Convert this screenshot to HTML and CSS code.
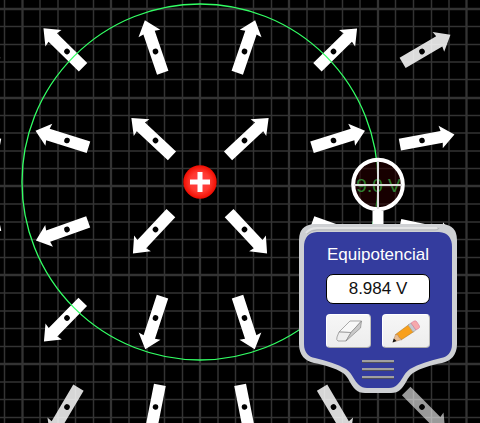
FILE: index.html
```html
<!DOCTYPE html>
<html lang="es">
<head>
<meta charset="utf-8">
<title>Equipotencial</title>
<link rel="stylesheet" href="styles.css">
</head>
<body>
<main class="stage">
  <svg class="field" aria-hidden="true">
    <defs>
      <path id="arrow" d="M33 0L19 11.500L20 6H-22.500V-6H20L19 -11.500ZM2.8 0A2.8 2.8 0 1 0 -2.8 0A2.8 2.8 0 1 0 2.8 0Z" fill-rule="evenodd"/>
      <radialGradient id="charge"><stop offset="0" stop-color="#ff4050"/><stop offset=".6" stop-color="#ff3a30"/><stop offset="1" stop-color="#f00c00"/></radialGradient>
    </defs>
    <path class="minor" d="M4.5 0V423M40 0V423M58 0V423M75.5 0V423M93.5 0V423M129 0V423M147 0V423M164.5 0V423M182.5 0V423M218 0V423M235.5 0V423M253.5 0V423M271.5 0V423M307 0V423M324.5 0V423M342.5 0V423M360 0V423M395.5 0V423M413.5 0V423M431.5 0V423M449 0V423M0 26.5H480M0 44.5H480M0 62H480M0 79.5H480M0 115.5H480M0 133H480M0 151H480M0 168.5H480M0 204H480M0 222H480M0 239.5H480M0 257.5H480M0 293H480M0 311H480M0 328.5H480M0 346.5H480M0 382H480M0 399.5H480M0 417.5H480"/>
    <path class="major" d="M22.5 0V423M111 0V423M200 0V423M289 0V423M378 0V423M466.5 0V423M0 9H480M0 98H480M0 186H480M0 275H480M0 364H480"/>
    <g class="arrows">
      <use href="#arrow" transform="translate(-22 51.5) rotate(210.4)" opacity=".85"/>
      <use href="#arrow" transform="translate(-22 140.5) rotate(190.6)"/>
      <use href="#arrow" transform="translate(-22 229.5) rotate(167.9)"/>
      <use href="#arrow" transform="translate(67 51.5) rotate(224.5)"/>
      <use href="#arrow" transform="translate(155.5 51.5) rotate(251.2)"/>
      <use href="#arrow" transform="translate(244.5 51.5) rotate(288.8)"/>
      <use href="#arrow" transform="translate(333.5 51.5) rotate(315.6)"/>
      <use href="#arrow" transform="translate(422 51.5) rotate(329.6)" opacity=".86"/>
      <use href="#arrow" transform="translate(67 140.5) rotate(197.3)"/>
      <use href="#arrow" transform="translate(155.5 140.5) rotate(223)"/>
      <use href="#arrow" transform="translate(244.5 140.5) rotate(317)"/>
      <use href="#arrow" transform="translate(333.5 140.5) rotate(342.7)"/>
      <use href="#arrow" transform="translate(422 140.5) rotate(349.4)"/>
      <use href="#arrow" transform="translate(67 229.5) rotate(160.4)"/>
      <use href="#arrow" transform="translate(155.5 229.5) rotate(133.2)"/>
      <use href="#arrow" transform="translate(244.5 229.5) rotate(46.8)"/>
      <use href="#arrow" transform="translate(333.5 229.5) rotate(19.6)"/>
      <use href="#arrow" transform="translate(422 229.5) rotate(12.1)"/>
      <use href="#arrow" transform="translate(67 318) rotate(134.4)"/>
      <use href="#arrow" transform="translate(155.5 318) rotate(108.1)"/>
      <use href="#arrow" transform="translate(244.5 318) rotate(71.9)"/>
      <use href="#arrow" transform="translate(67 407) rotate(120.6)" opacity=".84"/>
      <use href="#arrow" transform="translate(155.5 407) rotate(101.2)"/>
      <use href="#arrow" transform="translate(244.5 407) rotate(78.8)"/>
      <use href="#arrow" transform="translate(333.5 407) rotate(59.4)" opacity=".84"/>
      <use href="#arrow" transform="translate(422 407) rotate(45.4)" opacity=".6"/>
    </g>
    <circle class="equipotential" cx="200" cy="182" r="178"/>
    <circle cx="200" cy="182" r="16.7" fill="url(#charge)"/>
    <path class="plus" d="M190 182H210M200 172V192"/>
    <text class="line-label" x="378.5" y="192">9.0 V</text>
    <circle class="lens" cx="378" cy="184.5" r="24.8"/>
    <path class="crosshair" d="M354 185H402M378 161V209"/>
    <path class="stem" d="M378 211V225"/>
  </svg>

  <section class="meter" aria-labelledby="meter-title">
    <svg class="shell" viewBox="0 0 158 170" aria-hidden="true">
      <path fill="#ced0d3" d="M15 0H143Q158 1 158 16V120C158 131 152 137 143 139C132 141 122 144 114 149C108 153 107 161 101 166Q98 169 92 169H66Q60 169 57 166C51 161 50 153 44 149C36 144 26 141 15 139C6 137 0 131 0 120V16Q0 1 15 0Z"/>
      <path fill="#343c9e" d="M18 8H140Q153 9 153 23V120C153 129 148 133 142 134C130 137 120 140 111 145C104 150 103 157 98 161Q95 164 90 164H68Q63 164 60 161C55 157 54 150 47 145C38 140 28 137 16 134C10 133 5 129 5 120V23Q5 9 18 8Z"/>
      <path fill="none" stroke="#e3e4e5" stroke-width="2" d="M7 9Q11 4 18 4H138"/>
      <path fill="none" stroke="#b5b7b9" d="M8 10Q12 6 18 6H136Q140 6 140 4"/>
    </svg>
    <h1 class="title" id="meter-title">Equipotencial</h1>
    <output class="reading">8.984 V</output>
    <div class="tools">
      <button class="tool" type="button" aria-label="Borrar">
        <svg width="26" height="22" viewBox="0 0 26 22" aria-hidden="true">
          <g stroke="#888" stroke-width=".7" stroke-linejoin="round">
            <path fill="#f8f8f8" d="M3 12L14 1H25.500L15 12.500Z"/>
            <path fill="#eee" d="M3 12L15 12.500L10 21H2Q0 20 1 17Z"/>
            <path fill="#c9c9c9" d="M15 12.500L25.500 1L24.500 8L10 21Z"/>
          </g>
        </svg>
      </button>
      <button class="tool tool-draw" type="button" aria-label="Dibujar">
        <svg width="28" height="23" viewBox="0 0 28 23" aria-hidden="true">
          <path fill="#f8a01c" stroke="#a87018" stroke-width=".5" d="M3.500 14.500L17 4.500L22 11.500L9 20Z"/>
          <path fill="#e8bd92" stroke="#a88060" stroke-width=".5" d="M3.500 14.500L6 15L7 17.500L10 19.500L1 22Z"/>
          <path fill="#111" d="M1.800 18.500L4.500 21L.5 22.500Z"/>
          <path fill="#c4c8ce" stroke="#999" stroke-width=".5" d="M16 5L19 3L24 10L21 12Z"/>
          <path fill="#f6a9ac" stroke="#c58" stroke-width=".4" d="M19 3L22 1Q24 .3 25 2L27.500 6Q28 7.500 26.500 8.500L24 10Z"/>
        </svg>
      </button>
    </div>
    <div class="grip" aria-hidden="true"><i></i><i></i><i></i></div>
  </section>
</main>
</body>
</html>
```
FILE: styles.css
```css
* {
  box-sizing: border-box;
}

body {
  margin: 0;
  background: #000;
  font-family: "Liberation Sans", Arial, sans-serif;
}

.stage {
  position: relative;
  min-height: 100vh;
  overflow: hidden;
}

.field {
  position: absolute;
  inset: 0;
  width: 100%;
  height: 100%;
}

.minor,
.major {
  stroke: #333;
  stroke-width: 1.5;
}

.major {
  stroke-width: 2.3;
}

.arrows {
  fill: #fff;
}

.equipotential {
  fill: none;
  stroke: #32ff64;
  stroke-width: 1.3;
}

.plus {
  stroke: #fff;
  stroke-width: 5;
}

.line-label {
  fill: #32ff64;
  font-size: 19px;
  text-anchor: middle;
}

.lens {
  fill: rgb(45 0 0 / 50%);
  stroke: #fff;
  stroke-width: 4;
}

.crosshair {
  stroke: #ddd;
  stroke-width: 2;
}

.stem {
  stroke: #fff;
  stroke-width: 11;
}

.meter {
  position: absolute;
  left: 299px;
  top: 224px;
  width: 158px;
  padding: 20px 27px 12px;
  display: flex;
  flex-direction: column;
  align-items: center;
}

.shell {
  position: absolute;
  inset: 0;
  width: 100%;
}

.title,
.reading,
.tools,
.grip {
  position: relative;
}

.title {
  margin: 0 0 8px;
  color: #fff;
  font-size: 17px;
  font-weight: 400;
  line-height: 22px;
  white-space: nowrap;
}

.reading {
  align-self: stretch;
  height: 30px;
  border: 1px solid #000;
  border-radius: 7px;
  background: #fff;
  color: #111;
  font-size: 17px;
  line-height: 28px;
  text-align: center;
}

.tools {
  align-self: stretch;
  display: flex;
  justify-content: space-between;
  margin-top: 10px;
}

.tool {
  display: grid;
  place-items: center;
  width: 45px;
  height: 34px;
  padding: 0;
  border: 1px solid #c4c4c8;
  border-color: #fff #bbb #aaa #fff;
  border-radius: 4px;
  background: linear-gradient(#f6f6f6, #ededed);
}

.tool-draw {
  width: 48px;
}

.grip {
  display: grid;
  gap: 5px;
  margin-top: 12px;
}

.grip i {
  width: 32px;
  height: 3px;
  border-top: 2px solid #a0a0a0;
  border-bottom: 1px solid #50505c;
}
```
